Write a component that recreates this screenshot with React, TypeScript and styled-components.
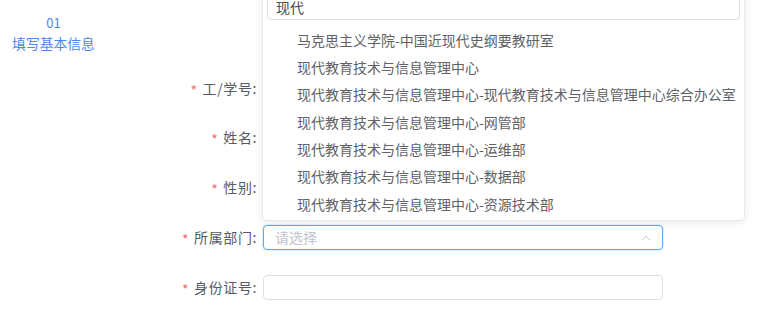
import styled, { createGlobalStyle } from 'styled-components';

const departments = [
  '马克思主义学院-中国近现代史纲要教研室',
  '现代教育技术与信息管理中心',
  '现代教育技术与信息管理中心-现代教育技术与信息管理中心综合办公室',
  '现代教育技术与信息管理中心-网管部',
  '现代教育技术与信息管理中心-运维部',
  '现代教育技术与信息管理中心-数据部',
  '现代教育技术与信息管理中心-资源技术部',
];

const fields = [
  { label: '工/学号' },
  { label: '姓名' },
  { label: '性别' },
  { label: '所属部门', select: true },
  { label: '身份证号' },
];

function App() {
  return (
    <>
      <GlobalStyle />
      <Page>
        <Steps>
          <StepNo>01</StepNo>
          <StepTitle>填写基本信息</StepTitle>
        </Steps>
        <Form>
          {fields.map((f) => (
            <Row key={f.label}>
              <Label>
                <Star>*</Star>
                {f.label}:
              </Label>
              {f.select ? (
                <SelectWrap>
                  <Input $focused placeholder='请选择' readOnly />
                  <Arrow viewBox='0 0 10 6'>
                    <path d='M1 5.2 L5 1.2 L9 5.2' />
                  </Arrow>
                  <Popover>
                    <SearchInput defaultValue='现代' />
                    <OptionList>
                      {departments.map((d) => (
                        <Option key={d}>{d}</Option>
                      ))}
                    </OptionList>
                  </Popover>
                </SelectWrap>
              ) : (
                <Input />
              )}
            </Row>
          ))}
        </Form>
      </Page>
    </>
  );
}

const GlobalStyle = createGlobalStyle`
  body {
    margin: 0;
    background: #fff;
    font-family: "Noto Sans CJK SC", "Liberation Sans", sans-serif;
    overflow: hidden;
  }
  * { box-sizing: border-box; }
`;

const Page = styled.div`
  display: flex;
  width: 782px;
  height: 318px;
  overflow: hidden;
`;

const Steps = styled.div`
  width: 107px;
  display: flex;
  flex-direction: column;
  align-items: center;
  padding-top: 14px;
  color: #4a88ec;
`;

const StepNo = styled.div`
  font-size: 13px;
  line-height: 18px;
`;

const StepTitle = styled.div`
  font-size: 13.8px;
  line-height: 22px;
`;

const Form = styled.div`
  display: flex;
  flex-direction: column;
  gap: 24.8px;
  padding-top: 75.5px;
`;

const Row = styled.div`
  display: flex;
  align-items: center;
  height: 25px;
`;

const Label = styled.label`
  width: 156px;
  text-align: right;
  padding-right: 6px;
  font-size: 14px;
  letter-spacing: 0.6px;
  color: #555a63;
  line-height: 25px;
  padding-top: 2px;
`;

const Star = styled.span`
  color: #f56c6c;
  margin-right: 5px;
  vertical-align: -2px;
`;

const Input = styled.input<{ $focused?: boolean }>`
  width: 400px;
  height: 25px;
  border: 1px solid ${(p) => (p.$focused ? '#5ea9f7' : '#dcdfe6')};
  border-radius: 4px;
  padding: 0 11px;
  font-size: 14px;
  font-family: inherit;
  outline: none;
  box-shadow: ${(p) => (p.$focused ? '0 0 0 1px rgba(64, 158, 255, 0.15)' : 'none')};
  &::placeholder {
    color: #c0c4cc;
  }
`;

const SelectWrap = styled.div`
  position: relative;
  display: flex;
`;

const Arrow = styled.svg`
  position: absolute;
  right: 12px;
  top: 10px;
  width: 10px;
  height: 6px;
  fill: none;
  stroke: #c0c4cc;
  stroke-width: 1;
`;

const Popover = styled.div`
  position: absolute;
  left: -1px;
  bottom: calc(100% + 4px);
  width: 483px;
  background: #fff;
  border: 1px solid #e8eaee;
  border-radius: 4px;
  box-shadow: 0 2px 8px rgba(0, 0, 0, 0.08);
  padding: 4px;
  z-index: 10;
`;

const SearchInput = styled.input`
  display: block;
  width: 100%;
  height: 26px;
  border: 1px solid #dcdfe6;
  border-radius: 4px;
  padding: 0 8px;
  font-size: 14px;
  font-family: inherit;
  color: #4a4c50;
  outline: none;
`;

const OptionList = styled.ul`
  list-style: none;
  margin: 5px 0 0;
  padding: 0;
`;

const Option = styled.li`
  height: 27.33px;
  line-height: 24.33px;
  padding-top: 3px;
  padding-left: 30px;
  font-size: 14px;
  color: #606266;
  white-space: nowrap;
`;

export default App;
